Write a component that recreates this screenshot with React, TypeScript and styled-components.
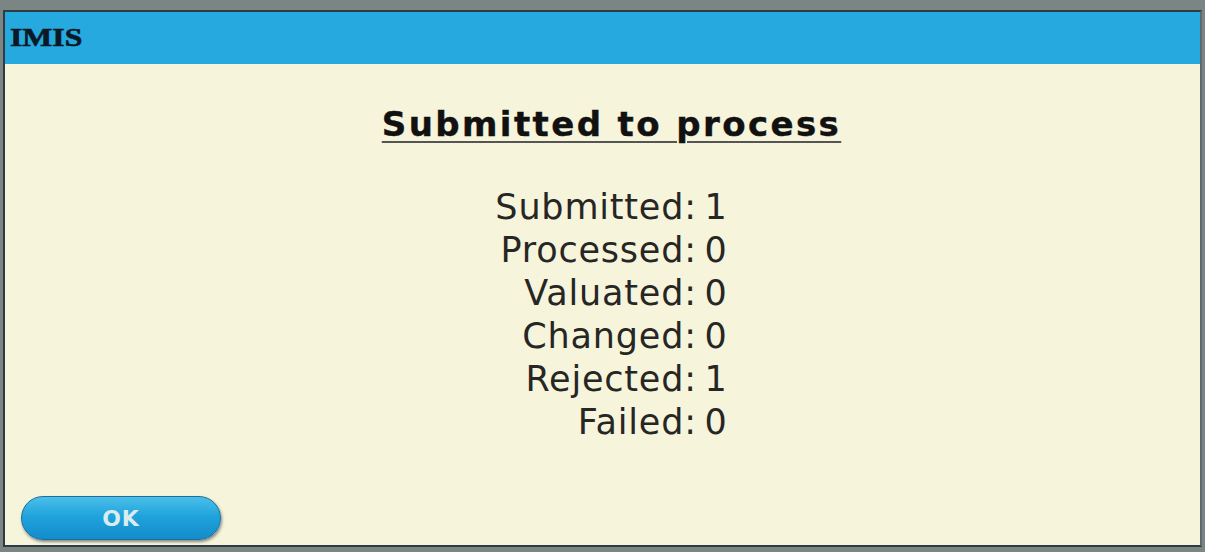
import React from "react";
import styled, { createGlobalStyle } from "styled-components";

const Global = createGlobalStyle`
  html, body { margin: 0; padding: 0; background: #7b8584; }
  body { width: 1205px; height: 552px; overflow: hidden; }
`;

const Screen = styled.div`
  box-sizing: border-box;
  width: 1205px;
  height: 552px;
  padding: 10px 3px 5px 3px;
  background: #7b8584;
  display: flex;
`;

const Dialog = styled.div`
  flex: 1;
  display: flex;
  flex-direction: column;
  border: 2px solid #2f3b44;
  border-right-color: #5d6a70;
  background: #f7f4dc;
`;

const TitleBar = styled.div`
  height: 52px;
  background: #25a9df;
  display: flex;
  align-items: center;
  padding-left: 5px;
`;

const Title = styled.span`
  display: inline-block;
  font-family: "Liberation Serif", serif;
  font-weight: 700;
  font-size: 26px;
  color: #0b1826;
  -webkit-text-stroke: 0.6px #0b1826;
  transform: scaleX(1.22);
  transform-origin: left center;
`;

const Body = styled.div`
  flex: 1;
  display: flex;
  flex-direction: column;
  align-items: center;
  padding-left: 18px;
`;

const Heading = styled.h1`
  margin: 40px 0 0 0;
  font-family: "DejaVu Sans", Verdana, sans-serif;
  font-weight: 700;
  font-size: 34px;
  letter-spacing: 2.4px;
  color: #111;
  -webkit-text-stroke: 0.4px #111;
  text-decoration: underline;
  text-decoration-thickness: 2px;
  text-underline-offset: 5px;
  text-decoration-color: #555;
`;

const Stats = styled.div`
  margin-top: 42px;
  display: flex;
  flex-direction: column;
  align-items: flex-end;
  font-family: "DejaVu Sans", Verdana, sans-serif;
  font-size: 35px;
  letter-spacing: 0.8px;
  line-height: 43px;
  color: #262624;
`;

const StatRow = styled.div`
  white-space: pre;
`;

const Footer = styled.div`
  margin-top: auto;
  align-self: stretch;
  margin-left: -18px;
  padding: 0 0 5px 16px;
`;

const OkButton = styled.button`
  width: 200px;
  height: 44px;
  border: 1px solid #1c6f9c;
  border-radius: 22px;
  background: linear-gradient(#4cbfe9 0%, #20a3dc 45%, #138ccb 100%);
  box-shadow: 1px 2px 3px rgba(40, 50, 60, 0.55);
  color: #d9edf0;
  font-family: "DejaVu Sans", Verdana, sans-serif;
  font-weight: 700;
  font-size: 22px;
  letter-spacing: 1px;
  padding: 0;
  cursor: pointer;
`;

const stats: [string, number][] = [
  ["Submitted", 1],
  ["Processed", 0],
  ["Valuated", 0],
  ["Changed", 0],
  ["Rejected", 1],
  ["Failed", 0],
];

export default function App() {
  return (
    <>
      <Global />
      <Screen>
        <Dialog>
          <TitleBar>
            <Title>IMIS</Title>
          </TitleBar>
          <Body>
            <Heading>Submitted to process</Heading>
            <Stats>
              {stats.map(([label, value]) => (
                <StatRow key={label}>{`${label}:\u2009${value}`}</StatRow>
              ))}
            </Stats>
            <Footer>
              <OkButton>OK</OkButton>
            </Footer>
          </Body>
        </Dialog>
      </Screen>
    </>
  );
}
